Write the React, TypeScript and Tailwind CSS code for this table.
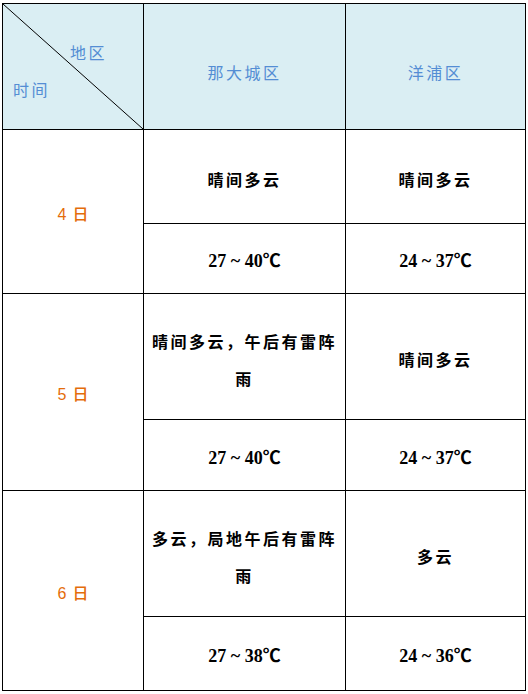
import React from "react";

const cjk = '"Liberation Serif", "Noto Sans CJK SC", serif';

function Cell({ children, className = "" }: { children: React.ReactNode; className?: string }) {
  return (
    <div className={`bg-white flex items-center justify-center text-center ${className}`}>{children}</div>
  );
}

function Weather({ text }: { text: string }) {
  return (
    <Cell className="px-[6px]">
      <div
        className="text-[16px] font-bold tracking-[2.5px] leading-[37px] text-black pt-[8px]"
        style={{ fontFamily: cjk }}
      >
        {text}
      </div>
    </Cell>
  );
}

function Temp({ text }: { text: string }) {
  return (
    <Cell>
      <div className="text-[18px] font-bold text-black pt-[6px]" style={{ fontFamily: cjk }}>
        {text}
      </div>
    </Cell>
  );
}

function DateCell({ n, rowClass }: { n: string; rowClass: string }) {
  return (
    <div className={`bg-white flex items-center justify-center ${rowClass}`}>
      <span
        className="text-[16px] font-medium text-[#E46C0A] pt-[6px]"
        style={{ fontFamily: '"Liberation Sans", "Noto Sans CJK SC", sans-serif' }}
      >
        {n}
        <span className="ml-[6px]">日</span>
      </span>
    </div>
  );
}

export default function App() {
  const headerText = "text-[16px] text-[#548DD4] tracking-[2.5px]";
  return (
    <div className="w-[528px] h-[694px] bg-white">
      <div
        className="ml-[2px] mt-[3px] w-[524px] grid bg-black p-px gap-px grid-cols-[140px_201px_179px] grid-rows-[125px_93px_69px_125px_70px_125px_73px]"
        style={{ fontFamily: '"Noto Sans CJK SC", sans-serif' }}
      >
        <div className="bg-[#DAEEF3] relative flex flex-col">
          <svg className="absolute inset-0" width="140" height="125" viewBox="0 0 140 125">
            <line x1="0" y1="0" x2="140" y2="125" stroke="#000" strokeWidth="1" />
          </svg>
          <div className={`${headerText} self-end pr-[36px] pt-[34px] leading-[28px]`}>地区</div>
          <div className={`${headerText} self-start pl-[10px] pt-[9px] leading-[28px]`}>时间</div>
        </div>
        <div className="bg-[#DAEEF3] flex items-center justify-center pt-[10px]">
          <span className={headerText}>那大城区</span>
        </div>
        <div className="bg-[#DAEEF3] flex items-center justify-center pt-[10px]">
          <span className={headerText}>洋浦区</span>
        </div>

        <DateCell n="4" rowClass="row-span-2" />
        <Weather text="晴间多云" />
        <Weather text="晴间多云" />
        <Temp text="27 ~ 40℃" />
        <Temp text="24 ~ 37℃" />

        <DateCell n="5" rowClass="row-span-2" />
        <Weather text="晴间多云，午后有雷阵雨" />
        <Weather text="晴间多云" />
        <Temp text="27 ~ 40℃" />
        <Temp text="24 ~ 37℃" />

        <DateCell n="6" rowClass="row-span-2" />
        <Weather text="多云，局地午后有雷阵雨" />
        <Weather text="多云" />
        <Temp text="27 ~ 38℃" />
        <Temp text="24 ~ 36℃" />
      </div>
    </div>
  );
}
